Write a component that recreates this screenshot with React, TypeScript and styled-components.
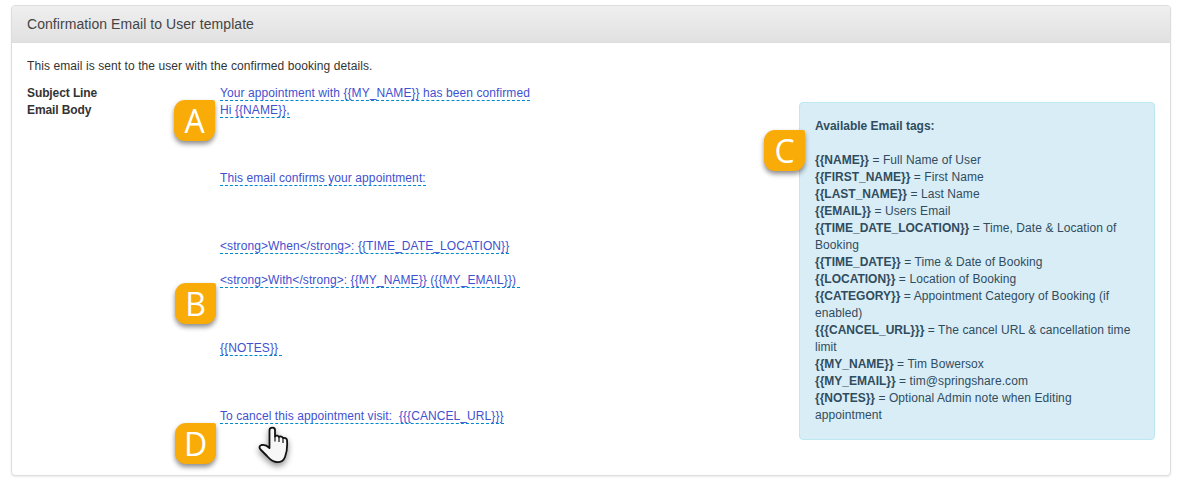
import React from "react";
import styled, { createGlobalStyle } from "styled-components";

const emailBody = `Hi {{NAME}},



This email confirms your appointment:



<strong>When</strong>: {{TIME_DATE_LOCATION}}

<strong>With</strong>: {{MY_NAME}} ({{MY_EMAIL}}) 



{{NOTES}} 



To cancel this appointment visit:  {{{CANCEL_URL}}}`;

const tags = [
  ["{{NAME}}", "Full Name of User"],
  ["{{FIRST_NAME}}", "First Name"],
  ["{{LAST_NAME}}", "Last Name"],
  ["{{EMAIL}}", "Users Email"],
  ["{{TIME_DATE_LOCATION}}", "Time, Date & Location of Booking"],
  ["{{TIME_DATE}}", "Time & Date of Booking"],
  ["{{LOCATION}}", "Location of Booking"],
  ["{{CATEGORY}}", "Appointment Category of Booking (if enabled)"],
  ["{{{CANCEL_URL}}}", "The cancel URL & cancellation time limit"],
  ["{{MY_NAME}}", "Tim Bowersox"],
  ["{{MY_EMAIL}}", "tim@springshare.com"],
  ["{{NOTES}}", "Optional Admin note when Editing appointment"],
];

const badges = [
  { label: "A", left: 174, top: 100 },
  { label: "B", left: 175, top: 283 },
  { label: "C", left: 764, top: 130 },
  { label: "D", left: 175, top: 423 },
];

const HandCursor = () => (
  <Hand viewBox="0 0 32 38" width="32" height="38">
    <path
      d="M11.500 4C11.500 .8 17 .8 17 4L17 10.500C18 9 20.500 9.500 21 11C22 10 24.500 10.500 25 12C26 11.500 28.800 12 29 14C29.500 20 29 26 27 31C25.500 35 22 36.500 18 36C14.500 35.500 12 33.500 9 30L2.500 23.500C.8 21.500 1.500 19.500 3.500 19C6 18.500 9 19.500 11.500 22Z"
      fill="#f7f7f7"
      stroke="#111"
      strokeWidth="1.8"
      strokeLinejoin="round"
    />
    <path d="M17 10.500v5M21 11v5M25 12v5" stroke="#111" strokeWidth="1.200" fill="none" />
  </Hand>
);

export default function App() {
  return (
    <Page>
      <GlobalStyle />
      <Panel>
        <PanelHeading>Confirmation Email to User template</PanelHeading>
        <PanelBody>
          <Intro>This email is sent to the user with the confirmed booking details.</Intro>
          <Columns>
            <Fields>
              <Field>
                <FieldLabel>Subject Line</FieldLabel>
                <div>
                  <Editable>{"Your appointment with {{MY_NAME}} has been confirmed"}</Editable>
                </div>
              </Field>
              <Field>
                <FieldLabel>Email Body</FieldLabel>
                <div>
                  <Editable>{emailBody}</Editable>
                </div>
              </Field>
            </Fields>
            <TagsCallout>
              <TagsTitle>Available Email tags:</TagsTitle>
              {tags.map(([tag, description]) => (
                <div key={tag}>
                  <strong>{tag}</strong> = {description}
                </div>
              ))}
            </TagsCallout>
          </Columns>
        </PanelBody>
      </Panel>
      {badges.map((badge) => (
        <Badge key={badge.label} $left={badge.left} $top={badge.top}>
          {badge.label}
        </Badge>
      ))}
      <HandCursor />
    </Page>
  );
}

const GlobalStyle = createGlobalStyle`
  body {
    margin: 0;
    background: #fff;
    color: #333;
    font-family: "Liberation Sans", Arial, sans-serif;
    font-size: 12px;
    line-height: 17px;
  }
`;

const Page = styled.div`
  position: relative;
  width: 1179px;
  height: 482px;
  padding: 5px 8px 0 11px;
  box-sizing: border-box;
  overflow: hidden;
`;

const Panel = styled.section`
  background: #fff;
  border: 1px solid #ddd;
  border-radius: 4px;
  box-shadow: 0 1px 2px rgba(0, 0, 0, 0.08);
  box-sizing: border-box;
  height: 471px;
`;

const PanelHeading = styled.h3`
  margin: 0;
  height: 36px;
  padding: 0 15px;
  background: linear-gradient(to bottom, #efefef, #e1e1e1);
  border-bottom: 1px solid #ddd;
  border-radius: 3px 3px 0 0;
  color: #444;
  font-size: 14px;
  font-weight: 400;
  line-height: 37px;
  letter-spacing: 0.06px;
`;

const PanelBody = styled.div`
  padding: 15px 15px 0;
`;

const Intro = styled.p`
  margin: 0 0 10px;
  letter-spacing: 0.08px;
`;

const Columns = styled.div`
  display: flex;
  justify-content: space-between;
  align-items: flex-start;
`;

const Fields = styled.div`
  display: flex;
  flex-direction: column;
  width: 600px;
`;

const Field = styled.div`
  display: grid;
  grid-template-columns: 193px 1fr;
`;

const FieldLabel = styled.strong`
  font-weight: 700;
  letter-spacing: -0.1px;
`;

const Editable = styled.a`
  color: #3f51cf;
  border-bottom: 1px dashed #08c;
  white-space: pre-wrap;
  letter-spacing: 0.08px;
`;

const TagsCallout = styled.aside`
  box-sizing: border-box;
  width: 356px;
  height: 338px;
  margin-top: 17px;
  padding: 15px;
  background: #d9edf7;
  border: 1px solid #bce8f1;
  border-radius: 4px;
  color: #304c5e;
  letter-spacing: 0.08px;
  strong {
    font-weight: 700;
    letter-spacing: 0;
  }
`;

const TagsTitle = styled.div`
  font-weight: 700;
  margin-bottom: 17px;
  letter-spacing: 0;
`;

const Badge = styled.div<{ $left: number; $top: number }>`
  position: absolute;
  left: ${(p) => p.$left}px;
  top: ${(p) => p.$top}px;
  width: 41px;
  height: 41px;
  display: flex;
  align-items: center;
  justify-content: center;
  background: #f9ab08;
  border-radius: 11px 2px 11px 11px;
  box-shadow: 0 3px 5px rgba(0, 0, 0, 0.45);
  color: #fff;
  font-family: "Open Sans", sans-serif;
  font-size: 32px;
  line-height: 1;
`;

const Hand = styled.svg`
  position: absolute;
  left: 258px;
  top: 426px;
  filter: drop-shadow(0 3px 3px rgba(0, 0, 0, 0.45));
`;
